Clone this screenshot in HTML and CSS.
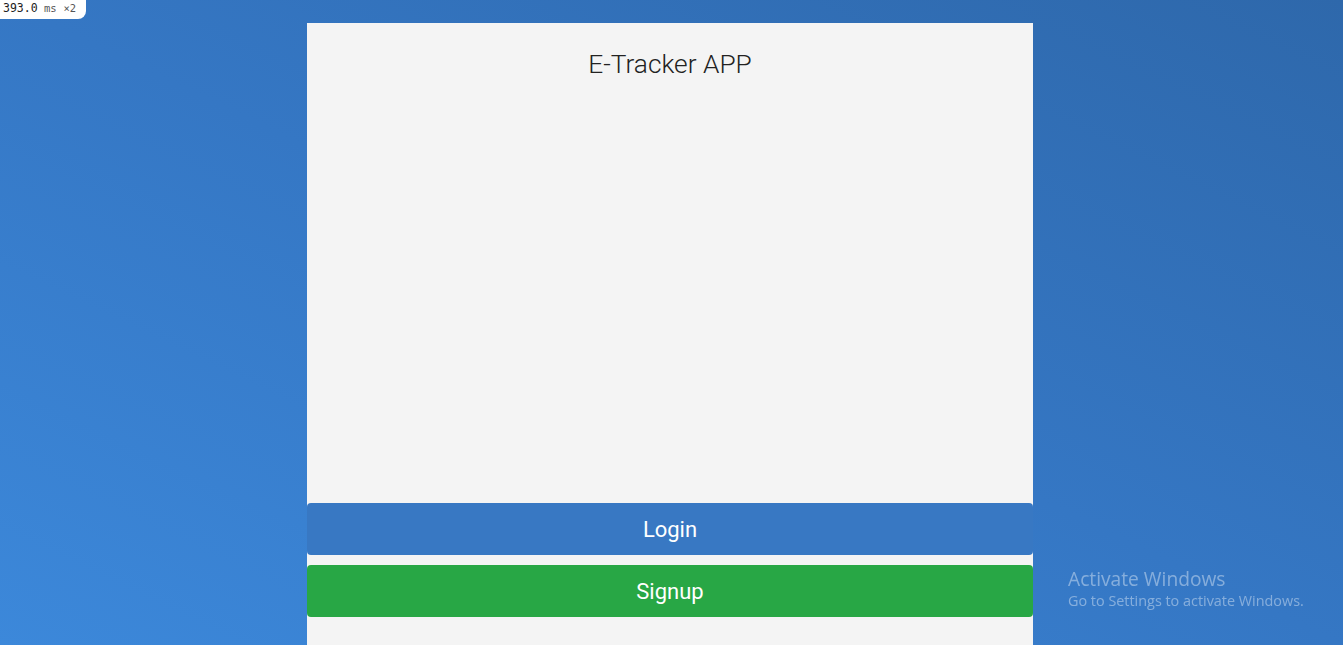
FILE: index.html
```html
<!DOCTYPE html>
<html lang="en">
<head>
<meta charset="utf-8">
<title>E-Tracker APP</title>
<link rel="stylesheet" href="styles.css">
</head>
<body>
  <div class="timing">393.0<span class="unit"> ms</span> <span class="mult">×2</span></div>
  <main class="card">
    <h1 class="title">E-Tracker APP</h1>
    <div class="spacer"></div>
    <div class="actions">
      <button class="btn btn-login">Login</button>
      <button class="btn btn-signup">Signup</button>
    </div>
  </main>
  <div class="watermark">
    <div class="wm-title">Activate Windows</div>
    <div class="wm-sub">Go to Settings to activate Windows.</div>
  </div>
</body>
</html>
```
FILE: styles.css
```css
* { box-sizing: border-box; }
html, body { height: 100%; }
body {
  margin: 0;
  padding-right: 3px;
  overflow: hidden;
  font-family: Roboto, "Liberation Sans", sans-serif;
  background: linear-gradient(to top right, #3c88da 0%, #3577c4 50%, #2e68ab 100%);
  display: flex;
  justify-content: center;
}
.card {
  margin-top: 23px;
  width: 726px;
  min-height: 622px;
  background: #f4f4f4;
  display: flex;
  flex-direction: column;
  padding-bottom: 28px;
}
.title {
  margin: 0;
  padding-top: 26px;
  text-align: center;
  font-weight: 300;
  font-size: 26.3px;
  line-height: 30px;
  color: #222;
}
.spacer { flex: 1; }
.actions {
  display: flex;
  flex-direction: column;
  gap: 10px;
}
.btn {
  height: 52px;
  border: none;
  border-radius: 4px;
  color: #fff;
  font-family: Roboto, "Liberation Sans", sans-serif;
  font-size: 22px;
  font-weight: 400;
  padding: 0;
  width: 100%;
}
.btn-login { background: #3878c3; }
.btn-signup { background: #28a745; }
.timing {
  position: absolute;
  top: 0;
  left: 0;
  height: 19px;
  width: 86px;
  background: #fff;
  border-bottom-right-radius: 8px;
  font-family: "DejaVu Sans Mono", monospace;
  font-size: 11.5px;
  line-height: 17px;
  padding-left: 3px;
  color: #222;
  white-space: nowrap;
}
.timing .unit, .timing .mult { color: #555; font-size: 10.5px; }
.watermark {
  position: fixed;
  left: 1068px;
  top: 566px;
  color: rgba(255, 255, 255, 0.4);
  font-family: "Open Sans", "Noto Sans", sans-serif;
}
.wm-title { font-size: 19.2px; line-height: 25px; }
.wm-sub { font-size: 14.4px; line-height: 20px; }
```
